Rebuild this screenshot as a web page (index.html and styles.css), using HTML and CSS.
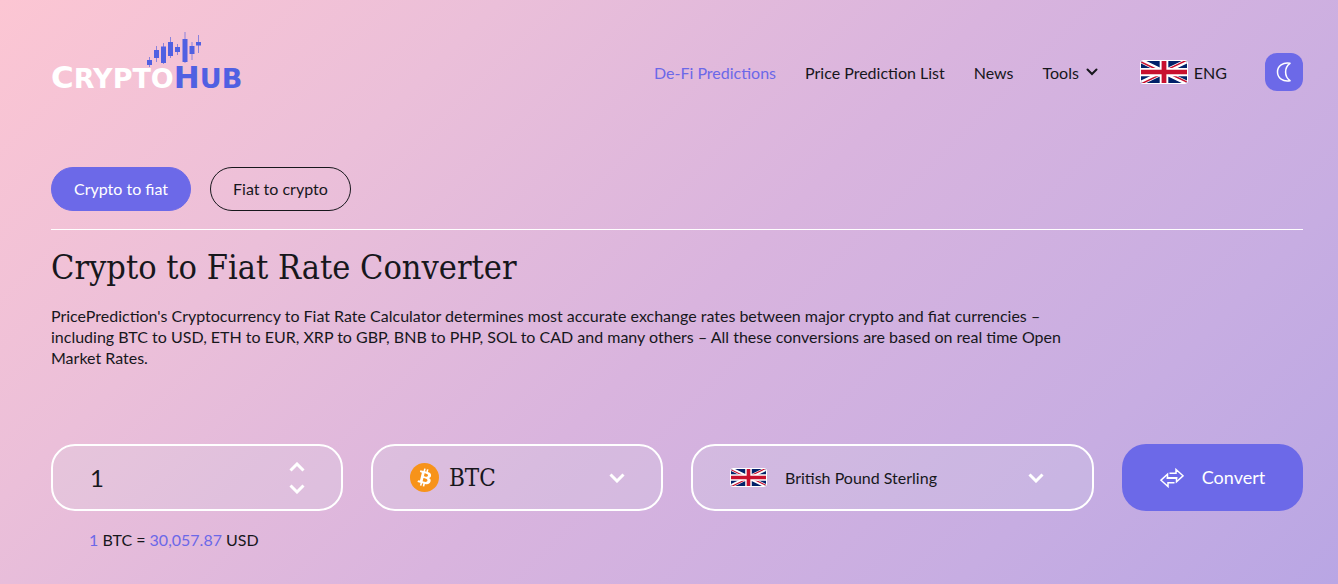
FILE: index.html
```html
<!DOCTYPE html>
<html lang="en">
<head>
<meta charset="utf-8">
<meta name="viewport" content="width=device-width, initial-scale=1">
<title>Crypto to Fiat Rate Converter</title>
<link rel="stylesheet" href="styles.css">
</head>
<body>
<svg class="defs" aria-hidden="true">
  <symbol id="flag-uk" viewBox="0 0 48 24" preserveAspectRatio="none">
    <path fill="#012169" d="M0 0h48v24H0z"/>
    <path stroke="#fff" stroke-width="5" d="M0 0l48 24M48 0L0 24"/>
    <path stroke="#c8102e" stroke-width="1.6" d="M0 1l22 11M48 23L26 12M47 -.5L24 11M1 24.5L24 13"/>
    <path fill="#fff" d="M19.500 0h9v24h-9zM0 7.500h48v9H0z"/>
    <path fill="#c8102e" d="M21.500 0h5v24h-5zM0 9.500h48v5H0z"/>
  </symbol>
</svg>
<div class="page">
  <header class="header">
    <a class="logo" href="#" aria-label="CryptoHub">
      <svg class="logo-chart" viewBox="0 0 56 36" aria-hidden="true">
        <path stroke="#8b82dc" d="M3.500 25v10M10.500 14v16M17.500 11v21M24.500 5v21M31.500 12v11M39 0v31M46 10v18M52.500 3v18"/>
        <path fill="#5060e2" d="M1 28h5v5H1zM8 18h5v8H8zM15 14.500h5V31h-5zM22 10h5v14h-5zM29 15h5v5h-5zM36.500 7h5v23h-5zM43.500 14h5v8h-5zM50 10h5v3.500h-5z"/>
      </svg>
      <span class="logo-text"><span class="logo-cap">C</span>RYPTO<span class="logo-hub"><span class="logo-cap">H</span>UB</span></span>
    </a>
    <nav class="nav">
      <a class="nav-link active" href="#">De-Fi Predictions</a>
      <a class="nav-link" href="#">Price Prediction List</a>
      <a class="nav-link" href="#">News</a>
      <button class="nav-link tools" type="button">Tools
        <svg width="12" height="8" viewBox="0 0 12 8" fill="none" stroke="#17171c" stroke-width="2" stroke-linecap="round" aria-hidden="true"><path d="M1.500 1.500L6 6l4.500-4.500"/></svg>
      </button>
      <button class="nav-link language" type="button">
        <svg class="flag flag-large" aria-hidden="true"><use href="#flag-uk"/></svg>ENG
      </button>
      <button class="theme" type="button" aria-label="Dark mode">
        <svg width="16" height="20" viewBox="0 0 16 20" fill="none" stroke="#fff" stroke-width="1.500" stroke-linejoin="round" aria-hidden="true"><path d="M14 1.300C10.800 3.600 9.600 6.500 9.600 10s1.200 6.400 4.400 8.700C7 20 1.500 16 1.500 10S7 0 14 1.300z"/></svg>
      </button>
    </nav>
  </header>

  <main>
    <div class="tabs">
      <button class="tab selected" type="button">Crypto to fiat</button>
      <button class="tab" type="button">Fiat to crypto</button>
    </div>
    <h1 class="title">Crypto to Fiat Rate Converter</h1>
    <p class="intro">PricePrediction's Cryptocurrency to Fiat Rate Calculator determines most accurate exchange rates between major crypto and fiat currencies – including BTC to USD, ETH to EUR, XRP to GBP, BNB to PHP, SOL to CAD and many others – All these conversions are based on real time Open Market Rates.</p>

    <form class="converter">
      <div class="field">
        <input class="amount" type="text" inputmode="decimal" value="1" aria-label="Amount">
        <div class="steps">
          <button class="step" type="button" aria-label="Increase"><svg class="chevron" viewBox="0 0 16 10" aria-hidden="true"><path d="M1.500 8.500L8 2l6.500 6.500"/></svg></button>
          <button class="step" type="button" aria-label="Decrease"><svg class="chevron" viewBox="0 0 16 10" aria-hidden="true"><path d="M1.500 1.500L8 8l6.500-6.500"/></svg></button>
        </div>
      </div>
      <div class="field">
        <svg class="coin" viewBox="0 0 32 32" aria-hidden="true">
          <circle cx="16" cy="16" r="16" fill="#f7931a"/>
          <path fill="#fff" d="M23.189 14.020c.314-2.096-1.283-3.223-3.465-3.975l.708-2.840-1.728-.430-.690 2.765c-.454-.114-.920-.220-1.385-.326l.695-2.783L15.596 6l-.708 2.839c-.376-.086-.746-.170-1.104-.260l.002-.009-2.384-.595-.460 1.846s1.283.294 1.256.312c.700.175.826.638.805 1.006l-.806 3.235c.048.012.110.030.180.057l-.183-.045-1.130 4.532c-.086.212-.303.531-.793.410.018.025-1.256-.313-1.256-.313l-.858 1.978 2.250.561c.418.105.828.215 1.231.318l-.715 2.872 1.727.430.708-2.840c.472.127.930.245 1.378.357l-.706 2.828 1.728.430.715-2.866c2.948.558 5.164.333 6.097-2.333.752-2.146-.037-3.385-1.588-4.192 1.130-.260 1.980-1.003 2.207-2.538zm-3.950 5.538c-.533 2.147-4.148.986-5.320.695l.950-3.805c1.172.293 4.929.872 4.370 3.110zm.535-5.569c-.487 1.953-3.495.960-4.470.717l.860-3.450c.975.243 4.118.696 3.610 2.733z"/>
        </svg>
        <select class="choice coin-choice" aria-label="Cryptocurrency"><option>BTC</option></select>
        <svg class="chevron" viewBox="0 0 16 10" aria-hidden="true"><path d="M1.500 1.500L8 8l6.500-6.500"/></svg>
      </div>
      <div class="field fiat">
        <svg class="flag" aria-hidden="true"><use href="#flag-uk"/></svg>
        <select class="choice" aria-label="Fiat currency"><option>British Pound Sterling</option></select>
        <svg class="chevron" viewBox="0 0 16 10" aria-hidden="true"><path d="M1.500 1.500L8 8l6.500-6.500"/></svg>
      </div>
      <button class="convert" type="button">
        <svg width="24" height="20" viewBox="0 0 24 20" fill="none" stroke="#fff" stroke-width="1.500" aria-hidden="true"><path d="M9.500 5.200H16V1.500l7 6.300-6.500 6V10.200H6.500M14.500 14.800H8v3.700l-7-6.300 6.500-6v3.600h10"/></svg>
        Convert
      </button>
    </form>
    <p class="result"><span class="accent">1</span> BTC = <span class="accent">30,057.87</span> USD</p>
  </main>
</div>
</body>
</html>
```
FILE: styles.css
```css
* { box-sizing: border-box; }

body {
  margin: 0;
  min-height: 100vh;
  background: linear-gradient(135deg, #fcc6d3 0%, #ebbfd9 26%, #d9b4de 52%, #c7ade2 80%, #b9a6e4 100%);
  color: #17171c;
  font: 16px/21px Lato, sans-serif;
}

button, input, select { font: inherit; color: inherit; }
button { border: 0; padding: 0; background: none; cursor: pointer; }

.defs { display: none; }
.page { padding: 32px 35px 32px 51px; }

.header { display: flex; justify-content: space-between; align-items: flex-start; }

.logo { display: flex; flex-direction: column; color: #fff; text-decoration: none; }
.logo-chart { width: 56px; height: 36px; margin-left: 95px; }
.logo-text { margin-top: -5px; font: bold 27px/28px "DejaVu Sans", sans-serif; }
.logo-cap { font-size: 31px; }
.logo-hub { color: #5060e2; }

.nav { display: flex; align-items: center; padding-top: 21px; }
.nav-link { color: #17171c; text-decoration: none; margin-right: 29px; white-space: nowrap; }
.nav-link.active { color: #6b68e8; }
.tools { display: flex; align-items: center; gap: 7px; margin-right: 42px; }
.language { display: flex; align-items: center; gap: 6px; margin-right: 38px; }

.flag { flex: none; width: 37px; height: 19px; border: 1px solid #fff; border-radius: 3px; }
.flag-large { width: 48px; height: 24px; }

.theme {
  display: flex;
  align-items: center;
  justify-content: center;
  width: 38px;
  height: 38px;
  border-radius: 12px;
  background: #6c69e8;
}

.tabs { display: flex; gap: 19px; margin-top: 74px; padding-bottom: 18px; border-bottom: 1px solid #fff; }
.tab { height: 44px; padding: 0 22px 2px; border: 1px solid #17171c; border-radius: 22px; }
.tab.selected { background: #6c69e8; border-color: #6c69e8; color: #fff; }

.title { margin: 17px 0 0; font: 34px/40px "DejaVu Serif Condensed", "DejaVu Serif", serif; }
.intro { max-width: 1030px; margin: 18px 0 0; }

.converter { display: grid; grid-template-columns: 292fr 292fr 403fr 181fr; gap: 28px; margin-top: 76px; }

.field {
  display: flex;
  align-items: center;
  min-width: 0;
  height: 67px;
  padding: 0 36px 0 37px;
  border: 2px solid #fff;
  border-radius: 24px;
  background: rgba(214, 224, 230, .17);
}
.fiat { padding-right: 48px; }
.amount { flex: 1; min-width: 0; padding: 0; border: 0; outline: 0; background: none; font-size: 24px; }
.steps { display: flex; flex-direction: column; gap: 12px; }
.step { display: flex; }
.chevron { flex: none; width: 16px; height: 10px; fill: none; stroke: #fff; stroke-width: 3; pointer-events: none; }

.coin { flex: none; width: 29px; height: 29px; margin-right: 10px; }
.choice { flex: 1; min-width: 0; padding: 0; border: 0; outline: 0; background: none; appearance: none; }
.coin-choice { font: 24px/32px "DejaVu Serif Condensed", "DejaVu Serif", serif; }
.fiat .flag { margin-right: 18px; }

.convert {
  display: flex;
  align-items: center;
  justify-content: center;
  gap: 18px;
  height: 67px;
  border-radius: 24px;
  background: #6c69e8;
  color: #fff;
  font-size: 18px;
}

.result { margin: 18px 0 0 38px; }
.accent { color: #6b68e8; }
```
